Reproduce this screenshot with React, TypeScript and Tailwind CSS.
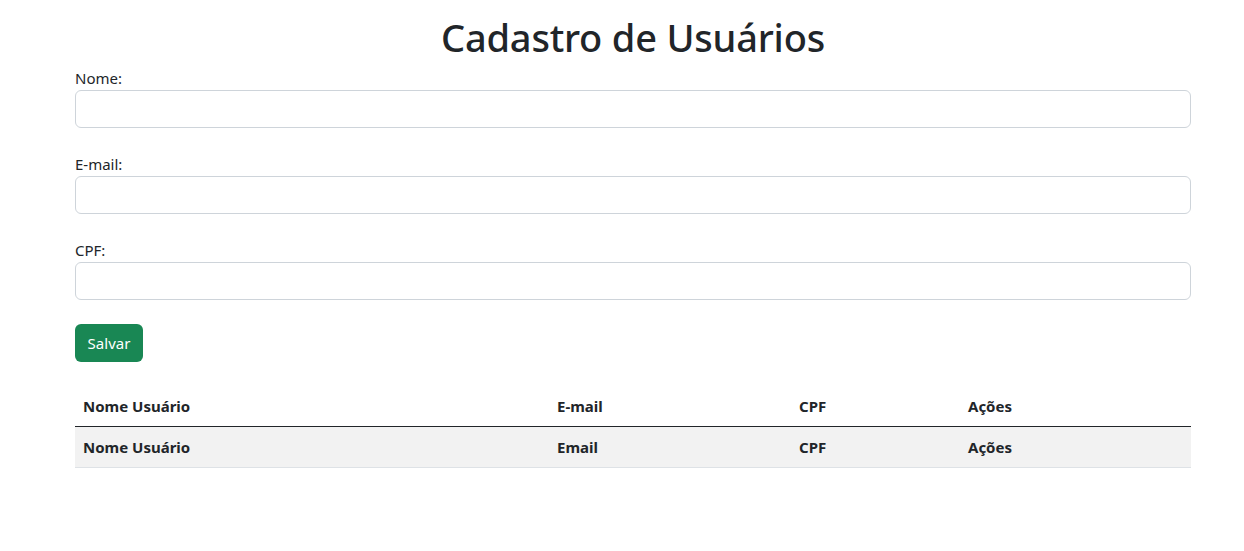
export default function App() {
  const cols = [
    { head: "Nome Usuário", body: "Nome Usuário", w: "w-[474px]" },
    { head: "E-mail", body: "Email", w: "w-[242px]" },
    { head: "CPF", body: "CPF", w: "w-[169px]" },
    { head: "Ações", body: "Ações", w: "" },
  ];
  const fields = ["Nome:", "E-mail:", "CPF:"];

  return (
    <div className="min-h-screen bg-white text-[#212529] font-['Noto_Sans',sans-serif]">
      <div className="ml-[75px] w-[1116px] pt-[13px]">
        <h1 className="mb-[5px] text-center text-[38px] font-medium leading-[48px] tracking-[-0.2px]">
          Cadastro de Usuários
        </h1>

        <form className="flex flex-col" onSubmit={(e) => e.preventDefault()}>
          {fields.map((label) => (
            <div key={label} className="mb-[24px] flex flex-col">
              <label className="text-[15px] leading-6">{label}</label>
              <input
                type="text"
                className="h-[38px] w-full rounded-[6px] border border-[#ced4da] bg-white px-3 outline-none"
              />
            </div>
          ))}
          <div>
            <button
              type="submit"
              className="h-[38px] w-[68px] rounded-[6px] bg-[#198754] text-[15px] text-white"
            >
              Salvar
            </button>
          </div>
        </form>

        <table className="mt-[24px] w-full border-collapse text-[15px]">
          <thead>
            <tr className="border-b border-[#212529]">
              {cols.map((c) => (
                <th key={c.head} className={`${c.w} px-2 py-2 text-left font-bold leading-6`}>
                  {c.head}
                </th>
              ))}
            </tr>
          </thead>
          <tbody>
            <tr className="border-b border-[#dee2e6] bg-[#f2f2f2]">
              {cols.map((c) => (
                <td key={c.head} className="px-2 py-2 font-bold leading-6">
                  {c.body}
                </td>
              ))}
            </tr>
          </tbody>
        </table>
      </div>
    </div>
  );
}
